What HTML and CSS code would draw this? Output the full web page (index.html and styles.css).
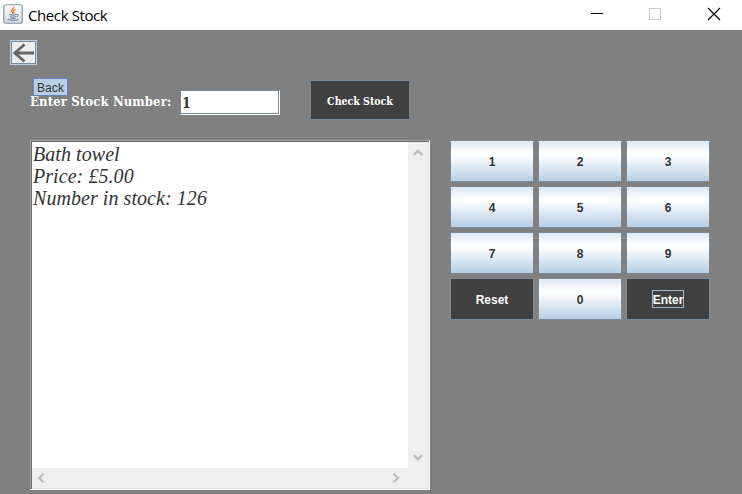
FILE: index.html
```html
<!DOCTYPE html>
<html lang="en">
<head>
<meta charset="utf-8">
<title>Check Stock</title>
<link rel="stylesheet" href="styles.css">
</head>
<body>
<header class="titlebar">
  <svg class="java" width="20" height="20" viewBox="0 0 20 20">
    <defs><linearGradient id="tile" x2="0" y2="1"><stop stop-color="#fff"/><stop offset="1" stop-color="#d3dce4"/></linearGradient></defs>
    <rect x=".75" y=".75" width="18.5" height="18.5" rx="2" fill="url(#tile)" stroke="#8298ad" stroke-width="1.2"/>
    <path d="M10.8 2.5c1 2-3.4 3-2 5.1l1.2 2M12.5 5.4c-3 1.2-2.6 2-1.6 3.1.4.7 0 1-.4 1.5" fill="none" stroke="#ef8430" stroke-width="1.3"/>
    <path d="M6 10.5c2 .8 5 .8 7.3 0M7 12.6c2 .7 4 .7 6 0M7.5 14.3c1.5.6 3.5.6 5 0M13.3 10.6c2.5-.8 2.5 1.6.2 2.6M5.5 14.6c-2 .8 0 1.7 4.5 1.7 3 0 5-.4 5.5-1.3" fill="none" stroke="#587c9b" stroke-width="1"/>
  </svg>
  <h1 class="title">Check Stock</h1>
  <svg class="controls" width="132" height="14" viewBox="0 0 132 14" fill="none" shape-rendering="crispEdges">
    <path d="M0 6.5h12" stroke="#000"/>
    <rect x="58.5" y="1.5" width="11" height="11" stroke="#ccc"/>
    <path d="M117 1l12 12M129 1l-12 12" stroke="#000" stroke-width="1.2" shape-rendering="auto"/>
  </svg>
</header>
<main class="window">
  <button class="back" aria-label="Back">
    <svg width="23" height="21" viewBox="0 0 23 21" fill="none" stroke="#686868"><path d="M2 11h20" stroke-width="3"/><path d="M12.5 2.5L2.8 11l9.700 8.500" stroke-width="2.800"/></svg>
  </button>
  <span class="tooltip">Back</span>
  <div class="lookup">
    <label class="label">Enter Stock Number:</label>
    <div class="field">1</div>
    <button class="check">Check Stock</button>
  </div>
  <div class="content">
    <section class="output">
      <div class="text">Bath towel<br>Price: £5.00<br>Number in stock: 126</div>
      <div class="vbar">
        <svg width="10" height="8" viewBox="0 0 10 8"><path d="M.7 6L5 1.800 9.300 6"/></svg>
        <svg width="10" height="8" viewBox="0 0 10 8"><path d="M.7 2L5 6.200 9.300 2"/></svg>
      </div>
      <div class="hbar">
        <svg width="8" height="10" viewBox="0 0 8 10"><path d="M6.500.7L2.200 5l4.300 4.300"/></svg>
        <svg width="8" height="10" viewBox="0 0 8 10"><path d="M1.500.7L5.800 5 1.500 9.300"/></svg>
      </div>
    </section>
    <div class="keypad">
      <button class="key">1</button><button class="key">2</button><button class="key">3</button>
      <button class="key">4</button><button class="key">5</button><button class="key">6</button>
      <button class="key">7</button><button class="key">8</button><button class="key">9</button>
      <button class="key dark">Reset</button><button class="key">0</button><button class="key dark"><span class="focus">Enter</span></button>
    </div>
  </div>
</main>
</body>
</html>
```
FILE: styles.css
```css
* { box-sizing: border-box; }
body { margin: 0; width: 742px; height: 494px; overflow: hidden; background: #808080; }
button { margin: 0; padding: 0; border: 1px solid #7a8a99; border-radius: 0; display: flex; align-items: center; justify-content: center; }
svg { display: block; flex: none; }

.titlebar { height: 30px; padding: 0 19px 0 3px; background: #fff; display: flex; align-items: center; }
.java { margin-top: -3px; }
.title { margin: -1px 0 0 5px; font: 400 15px/30px "Open Sans", sans-serif; letter-spacing: -.4px; color: #000; }
.controls { margin-left: auto; margin-top: -2px; }

.window { position: relative; height: 464px; padding: 10px 0 0 10px; }
.back { width: 27px; height: 25px; background: #eee; border: 1px solid #b8cfe5; box-shadow: inset 0 0 0 1px #7a8a99; }
.tooltip { position: absolute; left: 33px; top: 48px; width: 35px; height: 18px; border: 1px solid #6382bf; background: #b8cfe5; color: #333; font: 12px/18px "Liberation Sans", sans-serif; text-align: center; letter-spacing: .1px; }

.lookup { position: relative; margin: 15px 0 0 20px; height: 40px; display: flex; align-items: flex-start; }
.label { width: 150px; margin-top: 11px; font: bold 13px/22px "DejaVu Serif Condensed", "DejaVu Serif", serif; font-stretch: condensed; letter-spacing: .12px; color: #fff; white-space: nowrap; }
.field { width: 100px; height: 25px; margin-top: 10px; padding-left: 1px; background: #fff; border: 1px solid; border-color: #7a8a99 #fff #fff #7a8a99; box-shadow: inset -1px -1px #7a8a99; font: bold 14px/25px "DejaVu Serif Condensed", serif; font-stretch: condensed; color: #333; }
.check { width: 100px; height: 40px; margin-left: 30px; padding-top: 1px; background: #404040; color: #fff; font: bold 10.5px "DejaVu Serif Condensed", serif; font-stretch: condensed; }

.content { margin: 20px 0 0 20px; display: flex; align-items: flex-start; gap: 20px; }
.output { width: 400px; height: 350px; display: grid; grid-template: 1fr 20px / 1fr 20px; background: #efefef; border: 1px solid; border-color: #a0a0a0 #fff #fff #a0a0a0; box-shadow: inset 1px 1px #696969, inset -1px -1px #e3e3e3; padding: 1px; }
.text { background: #fff; color: #333; font: italic 20px/22px "Liberation Serif", serif; letter-spacing: .06px; padding: 1px 0 0 1px; white-space: nowrap; }
.vbar { display: flex; flex-direction: column; justify-content: space-between; align-items: center; padding: 7px 0; }
.hbar { display: flex; justify-content: space-between; align-items: center; padding: 0 8px 0 5px; }
.vbar path, .hbar path { fill: none; stroke: #bfbfbf; stroke-width: 2.4; }

.keypad { display: grid; grid-template-columns: repeat(3, 84px); grid-auto-rows: 42px; gap: 4px; }
.key { padding-top: 1px; background: linear-gradient(#dde8f3 0, #fff 30%, #fff 34%, #b8cfe5 100%); font: bold 12px "Liberation Sans", sans-serif; color: #333; }
.key.dark { background: #404040; color: #fff; }
.focus { height: 18px; margin-top: -1px; line-height: 18px; border: 1px solid #a3b8cc; }
```
